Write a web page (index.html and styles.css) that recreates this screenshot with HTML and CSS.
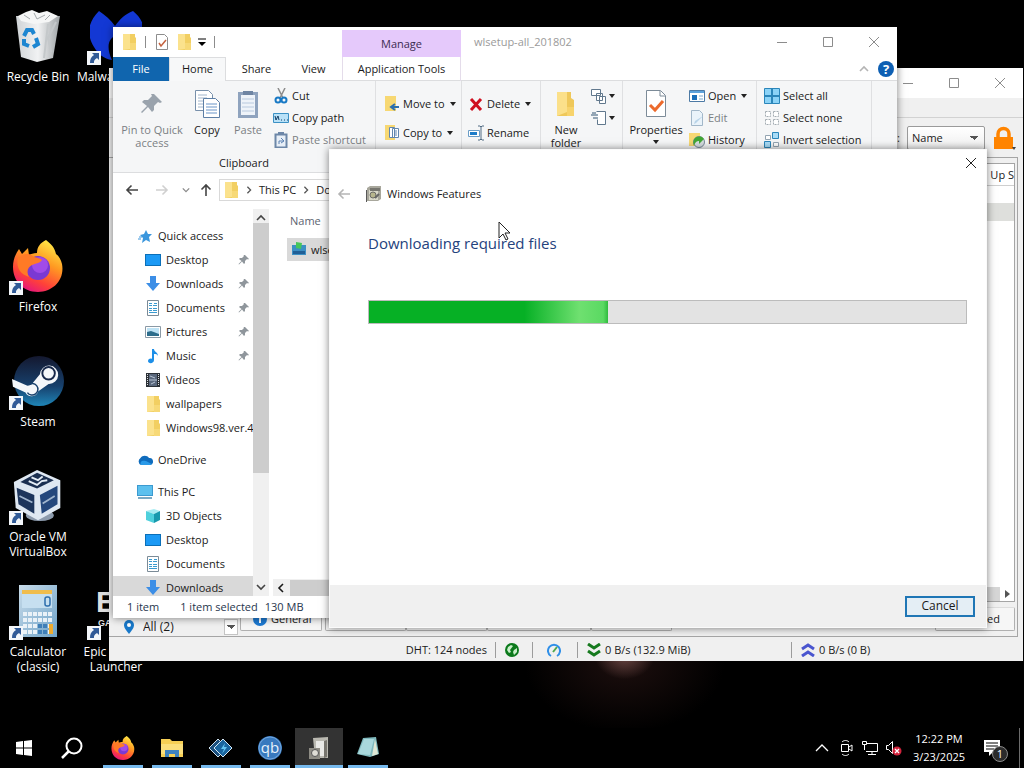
FILE: index.html
```
<!DOCTYPE html>
<html lang="en">
<head>
  <meta charset="UTF-8">
  <title>Desktop</title>
  <link rel="stylesheet" href="styles.css">
</head>
<body>
  <svg class="sprite" aria-hidden="true">
    <defs>
      <linearGradient id="gFox" x1="0.8" y1="0" x2="0.3" y2="1">
        <stop offset="0" stop-color="#fff04a"/><stop offset="0.4" stop-color="#ff9a22"/><stop offset="0.75" stop-color="#ff4139"/><stop offset="1" stop-color="#e4147f"/>
      </linearGradient>
      <linearGradient id="gSteam" x1="0" y1="0" x2="0" y2="1">
        <stop offset="0" stop-color="#14182f"/><stop offset="0.6" stop-color="#17406c"/><stop offset="1" stop-color="#1f86b8"/>
      </linearGradient>
      <linearGradient id="gBin" x1="0" y1="0" x2="1" y2="0">
        <stop offset="0" stop-color="#cfd3d6"/><stop offset="0.5" stop-color="#f1f2f3"/><stop offset="1" stop-color="#9fa4a7"/>
      </linearGradient>
      <linearGradient id="gCalc" x1="0" y1="0" x2="1" y2="1">
        <stop offset="0" stop-color="#c9dcea"/><stop offset="1" stop-color="#6fa3c8"/>
      </linearGradient>
    </defs>
    <symbol id="folder" viewBox="0 0 16 16"><path d="M2 0h12v3l1 1v12H2z" fill="#f2cf62"/><path d="M2 0h7v15l-7 1z" fill="#fbe28d"/><path d="M9 9h6v7H9z" fill="#f7d977"/></symbol>
    <symbol id="pin" viewBox="0 0 24 24"><path d="M14 2l8 8-2 1-2-1-4 4v4l-2 2-4-5-6 6-1-1 6-6-5-4 2-2h4l4-4-1-2z"/></symbol>
    <symbol id="screen" viewBox="0 0 16 16"><path d="M0 2h16v12H0z" fill="#0b6fb8"/><path d="M1 3h14v10H1z" fill="#1c9af5"/></symbol>
    <symbol id="down" viewBox="0 0 16 16"><path d="M5 0h6v7h4l-7 8-7-8h4z" fill="#3c8ee6"/></symbol>
    <symbol id="doc" viewBox="0 0 16 16"><path d="M2.500 .5h11v15h-11z" fill="#fff" stroke="#7b8b97"/><path d="M4 3.500h3M9 3.500h3M4 5.500h3M8 5.500h4M4 8.500h3M8 8.500h4M4 10.500h3M8 10.500h4M4 12.500h8" stroke="#3b9bd0"/></symbol>
    <symbol id="pic" viewBox="0 0 16 16"><path d="M.5 2.500h15v11H.5z" fill="#fff" stroke="#8a99a5"/><path d="M2 4h12v8H2z" fill="#bfe3f5"/><path d="M2 8l4-1 8 3v2H2z" fill="#2d6d8c"/></symbol>
    <symbol id="music" viewBox="0 0 16 16"><path d="M7 1h2c0 3 4 3 4 7-1-2-2-2-4-2v6c0 4-6 4-6 1s4-3 4-2z" fill="#1d8fe8"/></symbol>
    <symbol id="video" viewBox="0 0 16 16"><path d="M1 1h14v14H1z" fill="#2b3036"/><path d="M4 2h8v12H4z" fill="#59677c"/><path d="M4 8h8M5 4l5 2M6 12l4-2" stroke="#b8c4d4"/><path d="M2.500 2v12M13.500 2v12" stroke="#dce0e4" stroke-dasharray="1 1"/></symbol>
    <symbol id="star" viewBox="0 0 16 16"><path d="M9 2l2 4 4 0-3 3 1 5-4-2-4 3 1-5-3-3 4-1z" fill="#3a96dd"/><path d="M2 9h3M1 11h3" stroke="#3a96dd"/></symbol>
    <symbol id="cloud" viewBox="0 0 16 16"><path d="M4 13a4 4 0 0 1-.5-7A5 5 0 0 1 12 6a3.500 3.500 0 0 1 1 7z" fill="#0f6cbd"/><path d="M4 13a3 3 0 0 1 1-4c4-1 5 1 10 3l-2 1z" fill="#2a9ae8"/></symbol>
    <symbol id="pc" viewBox="0 0 16 16"><path d="M0 1h16v11H0z" fill="#3c9ad0"/><path d="M1 2h14v9H1z" fill="#5cc0ee"/><path d="M1 14h14" stroke="#7aa9c4" stroke-width="2"/></symbol>
    <symbol id="cube" viewBox="0 0 16 16"><path d="M1 3l8-2 6 2-6 3z" fill="#a8ecf2"/><path d="M1 3l8 3v9l-8-3z" fill="#4fd0dc"/><path d="M9 6l6-3v9l-6 3z" fill="#1899ad"/></symbol>
    <symbol id="min" viewBox="0 0 12 12"><path d="M1 6.500h10" stroke="currentColor"/></symbol>
    <symbol id="max" viewBox="0 0 12 12"><path d="M1.500 1.500h9v9h-9z" fill="none" stroke="currentColor"/></symbol>
    <symbol id="close" viewBox="0 0 12 12"><path d="M1 1l10 10M11 1L1 11" stroke="currentColor"/></symbol>
    <symbol id="left" viewBox="0 0 14 14"><path d="M13 7H2M6.500 2.500L2 7l4.500 4.500" fill="none" stroke="currentColor" stroke-width="1.600"/></symbol>
    <symbol id="chev" viewBox="0 0 10 10"><path d="M1 7l4-4 4 4" fill="none" stroke="currentColor" stroke-width="1.600"/></symbol>
    <symbol id="shortcut" viewBox="0 0 14 14"><path d="M0 0h14v14H0z" fill="#f3f6fa"/><path d="M5 2h7v7l-2-2c-3 2-3 3-3 5H3c0-4 1-6 4-8z" fill="#305a97"/></symbol>
    <symbol id="firefox" viewBox="0 0 52 52">
      <path d="M34 0c8 6 9 10 10 14 3 2 5 6 6 10 3 16-9 28-24 28S1 41 1 27c0-7 2-12 6-18l3 5 6-6 1 7c2-1 4-2 8-2 0-6 3-10 9-13z" fill="url(#gFox)"/>
      <circle cx="26" cy="28" r="12" fill="#7a39d3"/><circle cx="28" cy="25" r="8" fill="#a14be8"/>
      <path d="M6 18c6-5 12-5 16-1 3 1 6 1 8 3-3 4-6 3-10 5-4 2-6 6-3 12C7 34 4 26 6 18z" fill="#ff7a26"/>
    </symbol>
  </svg>

  <main class="desktop">
    <div class="icons">
      <a class="icon" href="#">
        <svg viewBox="0 0 52 52"><path d="M4 6h44l-7 42-16 4-16-5z" fill="url(#gBin)"/><path d="M6 6l8-4 6-2 7 3 8-2 11 5-9 6-15 2-13-3z" fill="#f5f6f6"/><path d="M12 5l6 4M22 3l3 6 8-4M38 5l-5 5" stroke="#a3a8ab" fill="none"/><path d="M36 14l-4 34M44 12l-8 16 3 14" stroke="#c4c8ca" stroke-width="2" fill="none"/><path d="M12 26l3-6h5l2 4M24 28l2 6-5 3M17 36l-5-2 0-5" fill="none" stroke="#1d86d1" stroke-width="4"/></svg>
        <span>Recycle Bin</span>
      </a>
      <a class="icon" href="#">
        <svg viewBox="0 0 52 52"><path d="M9 1c6 4 12 9 16 15C30 9 35 4 43 1c10 8 16 22 7 36-5 9-12 14-20 16 6-8 5-20-3-28-9 3-11 12-5 25-8-1-14-6-18-13C-4 24-2 12 9 1z" fill="#1338d4"/></svg>
        <svg class="link-mark"><use href="#shortcut"/></svg>
        <span>Malwarebytes</span>
      </a>
      <a class="icon row3" href="#">
        <svg><use href="#firefox"/></svg>
        <svg class="link-mark"><use href="#shortcut"/></svg>
        <span>Firefox</span>
      </a>
      <a class="icon row4" href="#">
        <svg viewBox="0 0 54 54"><circle cx="28" cy="27" r="26" fill="url(#gSteam)"/><path d="M0 25l16 7 4-1 9-11a9.500 9.500 0 1 1 9 10l-11 8a7 7 0 0 1-13 1L1 33z" fill="#f4f7fa"/><circle cx="38" cy="19" r="6.500" fill="#f4f7fa" stroke="#17284a" stroke-width="2"/><path d="M17 31a6 6 0 1 1-1 8" fill="none" stroke="#17406c" stroke-width="1.500"/></svg>
        <svg class="link-mark"><use href="#shortcut"/></svg>
        <span>Steam</span>
      </a>
      <a class="icon row5" href="#">
        <svg viewBox="0 0 52 56"><ellipse cx="28" cy="49" rx="15" ry="6" fill="#8d9bad"/><path d="M0 13L25 0l25 11v30L26 54 2 41z" fill="#dfe8f2"/><path d="M7 13l18-10 18 8-18 9z" fill="#1b2f50"/><path d="M16 12l9 4 5-4 6-1M19 8l7 3 5-4" stroke="#e6eef6" stroke-width="2" fill="none"/><path d="M3 19l19 8v20L5 37z" fill="#1d355c"/><path d="M28 27l19-10v20L30 47z" fill="#24477c"/><path d="M6 28l14 7M31 36l13-8" stroke="#9fb4cd" stroke-width="2"/></svg>
        <svg class="link-mark"><use href="#shortcut"/></svg>
        <span>Oracle VM VirtualBox</span>
      </a>
      <a class="icon row6" href="#">
        <svg viewBox="0 0 52 52"><path d="M7 0h38v52H7z" fill="url(#gCalc)"/><path d="M10 5h30v4H10z" fill="#f0bd4d"/><path d="M10 9h30v14H10z" fill="#c6dff0"/><rect x="33" y="12" width="5" height="9" rx="2" fill="none" stroke="#2d6eac" stroke-width="1.500"/><path d="M11 29h30M11 35h30M11 41h30M11 47h30" stroke="#eaf2f8" stroke-width="4" stroke-dasharray="4 1"/><path d="M26 41h9M26 47h9" stroke="#3f7fb8" stroke-width="4" stroke-dasharray="4 1"/><path d="M37 39h4v10h-4z" fill="#efab2e"/></svg>
        <svg class="link-mark"><use href="#shortcut"/></svg>
        <span>Calculator (classic)</span>
      </a>
      <a class="icon row6 col2" href="#">
        <svg class="epic" viewBox="0 0 52 52"><text x="6" y="27" class="epic-big">EPIC</text><text x="8" y="41" class="epic-small">GAMES</text></svg>
        <svg class="link-mark"><use href="#shortcut"/></svg>
        <span>Epic Games Launcher</span>
      </a>
    </div>

    <section class="window torrent">
      <header class="title-row">
        <div class="caption">
          <button aria-label="Minimize"><svg><use href="#min"/></svg></button>
          <button aria-label="Maximize"><svg><use href="#max"/></svg></button>
          <button aria-label="Close"><svg><use href="#close"/></svg></button>
        </div>
      </header>
      <div class="menubar"></div>
      <div class="torrent-tools">
        <label for="filterBy">:</label>
        <select id="filterBy"><option>Name</option></select>
        <svg viewBox="0 0 24 26"><path d="M6 12V9a5.500 5.500 0 0 1 11 0v3" fill="none" stroke="#ff8400" stroke-width="3.500"/><path d="M2 12h19v12H2z" fill="#ff8400"/><path d="M20 22h4l-2 3z" fill="#444"/></svg>
      </div>
      <div class="torrent-main">
        <div class="trackers">
          <svg viewBox="0 0 12 16"><path d="M6 15C2 10 1 8 1 6a5 5 0 0 1 10 0c0 2-1 4-5 9z" fill="#1878c9"/><circle cx="6" cy="6" r="2" fill="#fff"/></svg>
          <select aria-label="Tracker filter"><option>All (2)</option></select>
        </div>
        <div class="transfers">
          <div class="transfer-list">
            <div class="col-head">Up S</div>
            <div class="selected"></div>
            <div class="hbar"><button aria-label="Scroll right"><svg viewBox="0 0 8 8"><path d="M2 0l5 4-5 4z" fill="#555"/></svg></button></div>
          </div>
          <nav class="tabs">
            <button class="tab-general"><svg viewBox="0 0 14 14"><circle cx="7" cy="7" r="7" fill="#1d7ad2"/><path d="M7 6v5M7 3v2" stroke="#fff" stroke-width="2"/></svg>General</button>
            <button class="tab-short">Trackers</button>
            <button class="tab-short">Peers</button>
            <button class="tab-long">HTTP Sources</button>
            <button class="tab-short">Content</button>
            <button class="tab-speed">Speed</button>
          </nav>
        </div>
      </div>
      <footer class="torrent-status">
        <span class="dht">DHT: 124 nodes</span>
        <span class="cell net"><svg viewBox="0 0 14 14"><circle cx="7" cy="7" r="7" fill="#0c7a1c"/><path d="M3 4l3-2 2 1-3 4 1 2-2 1-2-3zM9 7l3-2v4l-3 3-1-3z" fill="#c9efc9"/></svg></span>
        <span class="cell gauge"><svg viewBox="0 0 14 14"><path d="M4 13a6 6 0 1 1 6 0" fill="none" stroke="#2f8fe8" stroke-width="2"/><path d="M6 9l4-5" stroke="#4ea84e" stroke-width="2"/></svg></span>
        <span class="cell down"><svg viewBox="0 0 14 14"><path d="M1 1l6 4 6-4M1 8l6 4 6-4" fill="none" stroke="#167a1e" stroke-width="3"/></svg>0 B/s (132.9 MiB)</span>
        <span class="cell up"><svg viewBox="0 0 14 14"><path d="M1 6l6-4 6 4M1 13l6-4 6 4" fill="none" stroke="#4a55cf" stroke-width="3"/></svg>0 B/s (0 B)</span>
      </footer>
    </section>

    <section class="window explorer">
      <header class="title-row">
        <div class="quick-bar">
          <svg><use href="#folder"/></svg>
          <i></i>
          <svg viewBox="0 0 16 16"><path d="M2.500 .5h8l3 3v12h-11z" fill="#fff" stroke="#8d8d8d"/><path d="M5 9l2 3 5-6" fill="none" stroke="#c4623f" stroke-width="1.500"/></svg>
          <svg><use href="#folder"/></svg>
          <svg class="more" viewBox="0 0 8 8"><path d="M0 1h8" stroke="#000"/><path d="M0 4h8L4 8z"/></svg>
          <i></i>
        </div>
        <div class="manage">Manage</div>
        <h1>wlsetup-all_201802</h1>
        <div class="caption">
          <button aria-label="Minimize"><svg><use href="#min"/></svg></button>
          <button aria-label="Maximize"><svg><use href="#max"/></svg></button>
          <button aria-label="Close"><svg><use href="#close"/></svg></button>
        </div>
      </header>
      <nav class="ribbon-tabs">
        <button class="file">File</button>
        <button class="home">Home</button>
        <button>Share</button>
        <button>View</button>
        <button class="app-tools">Application Tools</button>
        <svg class="fold"><use href="#chev"/></svg>
        <svg class="help" viewBox="0 0 16 16"><circle cx="8" cy="8" r="8" fill="#0d5fb3"/><text x="8" y="13" class="help-mark">?</text></svg>
      </nav>
      <div class="ribbon">
        <div class="group clipboard">
          <div class="group-row">
            <button class="big pin-btn off"><svg><use href="#pin"/></svg>Pin to Quick access</button>
            <button class="big copy-btn"><svg viewBox="0 0 28 30"><path d="M2.500 1.500h13l4 4v16h-17z" fill="#fff" stroke="#7890ab"/><path d="M5 6h9M5 9h9M5 12h6M5 15h6M5 18h6" stroke="#a2b6cc"/><path d="M10.500 9.500h12l4 4v15h-16z" fill="#fff" stroke="#5d7fa6"/><path d="M13 15h11M13 18h11M13 21h11M13 24h11" stroke="#6b95c8"/></svg>Copy</button>
            <button class="big paste-btn off"><svg viewBox="0 0 28 30"><path d="M4 3h20v26H4z" fill="#8fa3be"/><path d="M7 6h14v20H7z" fill="#eef3f9"/><path d="M9 2h10v4H9z" fill="#6f85a3"/><path d="M8 10h12M8 14h12M8 18h12M8 22h12" stroke="#b8c9de"/></svg>Paste</button>
            <div class="stack">
              <button><svg viewBox="0 0 16 16"><path d="M5 0l5 10M12 0L7 10" stroke="#8c8c8c" stroke-width="1.500"/><circle cx="5" cy="12" r="2.500" fill="none" stroke="#1879c5" stroke-width="2"/><circle cx="11" cy="12" r="2.500" fill="none" stroke="#1879c5" stroke-width="2"/></svg>Cut</button>
              <button><svg viewBox="0 0 16 16"><path d="M.5 3.500h15v9H.5z" fill="#b9e1f7" stroke="#3c91c4"/><path d="M2 6l1 4 2-4 1 4M8 10h1M11 10h1M14 10h1" fill="none" stroke="#123e66"/></svg>Copy path</button>
              <button class="off"><svg viewBox="0 0 16 16"><path d="M2.500 2.500h11v13h-11z" fill="#e8eff7" stroke="#6d87a8" stroke-width="2"/><path d="M5 0h6v3H5z" fill="#6d87a8"/><path d="M6 12V9h4M8 6l3 3-3 2" fill="none" stroke="#5c82b3"/></svg>Paste shortcut</button>
            </div>
          </div>
          <h2>Clipboard</h2>
        </div>
        <div class="group move">
          <button><svg viewBox="0 0 16 16"><path d="M1 0h11v15H1z" fill="#f7d873"/><path d="M15 11H8M11 8l-4 3 4 3" fill="none" stroke="#2c6fae" stroke-width="2"/></svg>Move to<b></b></button>
          <button><svg viewBox="0 0 16 16"><path d="M1 0h10v15H1z" fill="#f7d873"/><path d="M5.500 2.500h5v10h-5zM8.500 3.500h6v9h-6z" fill="#fff" stroke="#6287b0"/><path d="M10 6h3M10 8h3M10 10h3" stroke="#6287b0"/></svg>Copy to<b></b></button>
        </div>
        <div class="group delete">
          <button><svg viewBox="0 0 16 16"><path d="M3 3l10 11M13 3L3 14" stroke="#cf1020" stroke-width="3"/></svg>Delete<b></b></button>
          <button><svg viewBox="0 0 16 16"><path d="M.5 5.500h11v6H.5z" fill="#fff" stroke="#6a9dc7"/><path d="M2 7h7v3H2z" fill="#1d7cc9"/><path d="M10 1h2l1 1 1-1h2M13 2v12M10 15h2l1-1 1 1h2" fill="none" stroke="#526c84"/></svg>Rename</button>
        </div>
        <div class="group new">
          <button class="big"><svg viewBox="0 0 28 30"><path d="M5 3h14v6l3 2v16H5z" fill="#efc85a"/><path d="M5 3h10v20L5 27z" fill="#fbe08a"/><path d="M15 18h7v9h-7z" fill="#f7d36c"/></svg>New folder</button>
          <div class="mini">
            <button aria-label="New item"><svg viewBox="0 0 16 16"><path d="M.5 1.500h9v6h-9zM5.500 5.500h6v7h-6zM8.500 8.500h6v7h-6z" fill="#fff" stroke="#61788d"/></svg><b></b></button>
            <button aria-label="Easy access"><svg viewBox="0 0 16 16"><path d="M5.500 1.500h9v13h-8v-5" fill="#fff" stroke="#61788d"/><path d="M0 5h7M2 8h5M1 3h4" stroke="#345675"/></svg><b></b></button>
          </div>
        </div>
        <div class="group open">
          <button class="big"><svg viewBox="0 0 28 30"><path d="M4.500 1.500h14l5 5v21h-19z" fill="#fff" stroke="#7c8b98"/><path d="M18 2v5h5" fill="none" stroke="#7c8b98"/><path d="M8 16l5 5 8-9" fill="none" stroke="#ec6a2c" stroke-width="3"/></svg>Properties<b></b></button>
          <div class="stack">
            <button><svg viewBox="0 0 16 16"><path d="M.5 2.500h15v11H.5z" fill="#fff" stroke="#4d7aa5"/><path d="M1 3h14v2H1z" fill="#5ea3dc"/><path d="M3 7h5v5H3z" fill="#1c6fb9"/><path d="M10 8h4M10 11h4" stroke="#7ba9cf"/></svg>Open<b></b></button>
            <button class="off"><svg viewBox="0 0 16 16"><path d="M2.500 .5h8l3 3v12h-11z" fill="#eaf3fa" stroke="#a2b7c9"/><path d="M14 6l-7 7-2 1 1-3z" fill="#b8d3e8"/></svg>Edit</button>
            <button><svg viewBox="0 0 16 16"><path d="M0 1h11v13H0z" fill="#f7d873"/><circle cx="10" cy="10" r="5.500" fill="#d7dde0" stroke="#789"/><path d="M13 5C6 3 3 8 5 14c1-4 3-5 5-5v3l5-5z" fill="#42a734"/></svg>History</button>
          </div>
        </div>
        <div class="group select">
          <div class="stack">
            <button><svg viewBox="0 0 16 16"><path d="M.5 .5h15v15H.5z" fill="#8bd3f7" stroke="#2b86ba"/><path d="M8 0v16M0 8h16" stroke="#2b86ba" stroke-width="2"/></svg>Select all</button>
            <button><svg viewBox="0 0 16 16"><path d="M1.500 1.500h5v5h-5zM9.500 1.500h5v5h-5zM1.500 9.500h5v5h-5zM9.500 9.500h5v5h-5z" fill="#fff" stroke="#a5adb3" stroke-dasharray="2 1"/></svg>Select none</button>
            <button><svg viewBox="0 0 16 16"><path d="M1.500 3.500h5v4h-5zM9.500 10.500h5v4h-5z" fill="#fff" stroke="#94a5b2"/><path d="M8.500 .5h6v6h-6zM.5 9.500h6v6h-6z" fill="#a9dcf7" stroke="#2b86ba"/></svg>Invert selection</button>
          </div>
        </div>
      </div>
      <div class="address">
        <button class="nav-btn" aria-label="Back"><svg><use href="#left"/></svg></button>
        <button class="nav-btn dim" aria-label="Forward"><svg class="flip"><use href="#left"/></svg></button>
        <button class="nav-btn recent" aria-label="Recent"><svg class="turn small"><use href="#chev"/></svg></button>
        <button class="nav-btn upward" aria-label="Up"><svg class="quarter"><use href="#left"/></svg></button>
        <div class="path"><svg><use href="#folder"/></svg><svg class="sep"><use href="#chev"/></svg><a href="#">This PC</a><svg class="sep"><use href="#chev"/></svg><a href="#">Downloads</a></div>
      </div>
      <div class="explorer-body">
        <nav class="tree">
          <a href="#"><svg><use href="#star"/></svg>Quick access</a>
          <a class="sub" href="#"><svg><use href="#screen"/></svg>Desktop<svg class="tack"><use href="#pin"/></svg></a>
          <a class="sub" href="#"><svg><use href="#down"/></svg>Downloads<svg class="tack"><use href="#pin"/></svg></a>
          <a class="sub" href="#"><svg><use href="#doc"/></svg>Documents<svg class="tack"><use href="#pin"/></svg></a>
          <a class="sub" href="#"><svg><use href="#pic"/></svg>Pictures<svg class="tack"><use href="#pin"/></svg></a>
          <a class="sub" href="#"><svg><use href="#music"/></svg>Music<svg class="tack"><use href="#pin"/></svg></a>
          <a class="sub" href="#"><svg><use href="#video"/></svg>Videos</a>
          <a class="sub" href="#"><svg><use href="#folder"/></svg>wallpapers</a>
          <a class="sub" href="#"><svg><use href="#folder"/></svg>Windows98.ver.4</a>
          <a class="root" href="#"><svg><use href="#cloud"/></svg>OneDrive</a>
          <a class="root" href="#"><svg><use href="#pc"/></svg>This PC</a>
          <a class="sub" href="#"><svg><use href="#cube"/></svg>3D Objects</a>
          <a class="sub" href="#"><svg><use href="#screen"/></svg>Desktop</a>
          <a class="sub" href="#"><svg><use href="#doc"/></svg>Documents</a>
          <a class="sub current" href="#"><svg><use href="#down"/></svg>Downloads</a>
        </nav>
        <div class="vbar">
          <svg><use href="#chev"/></svg>
          <div class="thumb"></div>
          <svg class="turn"><use href="#chev"/></svg>
        </div>
        <div class="files">
          <table>
            <thead><tr><th>Name</th></tr></thead>
            <tbody><tr><td><svg viewBox="0 0 16 16"><path d="M1 3h14v10H1z" fill="#3b8fc4"/><path d="M2 9h12v3H2z" fill="#205f96"/><path d="M5 0l6 1-1 6-5-1z" fill="#45c65a"/></svg>wlsetup-all</td></tr></tbody>
          </table>
          <div class="hscroll"><svg><use href="#chev"/></svg><div class="thumb"></div></div>
        </div>
      </div>
      <footer class="explorer-status"><span>1 item</span><span>1 item selected</span><span>130 MB</span></footer>
    </section>

    <section class="window dialog">
      <button class="dialog-close" aria-label="Close"><svg><use href="#close"/></svg></button>
      <header>
        <svg class="back"><use href="#left"/></svg>
        <svg viewBox="0 0 16 16"><path d="M1 2l3-2h11v13l-3 2H1z" fill="#a8a79c"/><path d="M3 4h9v10H3z" fill="#d9d8c9"/><path d="M0 4v12" stroke="#222" stroke-width="1.500"/><path d="M4 2h10v3H4z" fill="#77766f"/><circle cx="7" cy="9" r="3" fill="#b7b58d" stroke="#6b6b66"/><path d="M9 12l4-4" stroke="#666" stroke-width="2"/></svg>
        <h2>Windows Features</h2>
      </header>
      <div class="dialog-body">
        <h3>Downloading required files</h3>
        <div class="progress" role="progressbar" aria-label="Downloading required files" aria-valuenow="40" aria-valuemin="0" aria-valuemax="100"><div class="fill" style="width: 40%"></div></div>
      </div>
      <footer><button class="cancel">Cancel</button></footer>
    </section>

    <svg class="cursor" viewBox="0 0 13 20"><path d="M1 1v16l4-4 3 6 2-1-3-6h5z" fill="#fff" stroke="#222"/></svg>
  </main>

  <footer class="taskbar">
    <button aria-label="Start"><svg class="start" viewBox="0 0 16 16"><path d="M0 2l7-1v6.500H0zM8 1l8-1v7.500H8zM0 8.500h7V15l-7-1zM8 8.500h8V16l-8-1z" fill="#fff"/></svg></button>
    <button aria-label="Search"><svg viewBox="0 0 24 24"><circle cx="14" cy="10" r="7.500" fill="none" stroke="#fff" stroke-width="2"/><path d="M8.500 15.500L2 22" stroke="#fff" stroke-width="2.500"/></svg></button>
    <div class="apps">
      <button class="app" aria-label="Firefox"><svg><use href="#firefox"/></svg></button>
      <button class="app" aria-label="File Explorer"><svg viewBox="0 0 24 24"><path d="M1 3h9l2 2h11v16H1z" fill="#f6cf55"/><path d="M1 8h22v10H1z" fill="#fbdf7c"/><path d="M5 21v-7h14v7h-4v-3H9v3z" fill="#3f83bf"/></svg></button>
      <button class="app" aria-label="Disk tool"><svg viewBox="0 0 24 24"><path d="M0 12l9-9 9 9-9 9z" fill="#1b4f7d" stroke="#cfe2f0"/><path d="M5 12l9-9 9 9-9 9z" fill="#1a659f" stroke="#d5e8f5"/><path d="M16 7l-4 6h3l-2 5 5-7h-3z" fill="#63c6f3"/></svg></button>
      <button class="app" aria-label="qBittorrent"><svg viewBox="0 0 24 24"><circle cx="12" cy="12" r="12" fill="#3879be"/><circle cx="12" cy="12" r="11" fill="none" stroke="#72a6dc"/><text x="12" y="17" class="qb">qb</text></svg></button>
      <button class="app active" aria-label="Windows Features"><svg viewBox="0 0 24 24"><path d="M6 2l15-1v21H8z" fill="#b9b8b0"/><path d="M9 5h8v15H9z" fill="#e9e9e6"/><path d="M17 5l3-1v17l-3 1z" fill="#77756e"/><path d="M2 12h11v11H2z" fill="#8e8c84"/><circle cx="8" cy="17" r="3.500" fill="#dfddd5" stroke="#555"/></svg></button>
      <button class="app" aria-label="Notepad"><svg viewBox="0 0 24 24"><path d="M7 2l13-1 3 17-9 3-13-3z" fill="#7fb9bd"/><path d="M8 3h10l-4 16-12-1z" fill="#a9d8dc"/><path d="M19 3l3 15-6 2z" fill="#e0e8d5"/></svg></button>
    </div>
    <div class="tray">
      <svg viewBox="0 0 16 16"><path d="M2 11l6-6 6 6" fill="none" stroke="#fff" stroke-width="1.300"/></svg>
      <svg viewBox="0 0 16 16"><path d="M3.500 4.500h7v7h-7zM11 7l3-2v6l-3-2M4 2c2-2 5-2 7 0M4 14c2 2 5 2 7 0" fill="none" stroke="#fff"/></svg>
      <svg viewBox="0 0 16 16"><path d="M4 3.500h11.500v8H4M10 11v4M6 14.500h8M.5 1.500h4v3h-4zM2.500 5v5" fill="none" stroke="#fff"/></svg>
      <svg viewBox="0 0 16 16"><path d="M.5 5.500h2l4-4v12l-4-4h-2z" fill="none" stroke="#fff"/><circle cx="11" cy="11" r="4.500" fill="#d2233c"/><path d="M9 9l4 4M13 9l-4 4" stroke="#fff" stroke-width="1.300"/></svg>
      <time>12:22 PM<br>3/23/2025</time>
      <div class="notice">
        <svg viewBox="0 0 16 16"><path d="M0 0h16v12H9l-4 4v-4H0z" fill="#fff"/><path d="M2 3h12M2 6h12M2 9h8" stroke="#000"/></svg>
        <span class="count">1</span>
      </div>
      <i></i>
    </div>
  </footer>
</body>
</html>
```
FILE: styles.css
```
* {
  margin: 0;
  padding: 0;
  box-sizing: border-box;
}
body {
  height: 100vh;
  display: flex;
  flex-direction: column;
  overflow: hidden;
  background-color: #000000;
  color: #1a1a1a;
  font-family: "Open Sans", "Noto Sans", sans-serif;
  font-size: 11px;
  line-height: 16px;
}
button, select {
  font: inherit;
  color: inherit;
  background: none;
  border: none;
  border-radius: 0;
}
a {
  color: inherit;
  text-decoration: none;
}
h1, h2, h3 {
  font-size: 11px;
  font-weight: 400;
}
svg {
  display: block;
  flex: none;
  width: 16px;
  height: 16px;
}
.sprite {
  position: absolute;
  width: 0;
  height: 0;
}
.turn { transform: rotate(180deg); }
.flip { transform: scaleX(-1); }
.quarter { transform: rotate(90deg); }

/* desktop */
.desktop {
  flex: 1;
  position: relative;
  min-height: 0;
  background:
    radial-gradient(ellipse 30px 24px at 61% 90%, #6b4744, transparent),
    radial-gradient(ellipse 100px 70px at 61% 91%, #1d0f0e, transparent);
}
.icons {
  display: grid;
  grid-template-columns: 76px 76px;
  grid-template-rows: repeat(6, 115px);
  column-gap: 2px;
}
.icon {
  position: relative;
  display: flex;
  flex-direction: column;
  align-items: center;
  padding-top: 10px;
  color: #ffffff;
  font-size: 12px;
  line-height: 15px;
  text-align: center;
}
.icon > svg {
  width: 52px;
  height: 52px;
  margin-bottom: 7px;
}
.icon .link-mark {
  position: absolute;
  left: 9px;
  top: 51px;
  width: 14px;
  height: 14px;
}
.epic text {
  fill: #dedede;
  font-family: "Liberation Sans Narrow", "Liberation Sans", sans-serif;
  font-weight: 700;
}
.epic-big { font-size: 30px; }
.epic-small { font-size: 9px; }
.row3 { grid-row: 3; }
.row4 { grid-row: 4; }
.row5 { grid-row: 5; }
.row6 { grid-row: 6; }
.col2 { grid-column: 2; }

/* windows */
.window {
  position: absolute;
  display: flex;
  flex-direction: column;
  background-color: #ffffff;
}
.title-row {
  display: flex;
  height: 30px;
}
.caption {
  display: flex;
  margin-left: auto;
  color: #8c8c8c;
}
.caption button {
  width: 46px;
  display: flex;
  align-items: center;
  justify-content: center;
}
.caption svg {
  width: 12px;
  height: 12px;
}

/* torrent client */
.torrent {
  left: 109px;
  right: 1px;
  top: 68px;
  bottom: 67px;
  background-color: #f0f0f0;
}
.torrent .title-row {
  background-color: #ffffff;
}
.menubar {
  height: 20px;
  border-bottom: 1px solid #d2d2d2;
}
.torrent-tools {
  display: flex;
  align-items: center;
  justify-content: flex-end;
  gap: 7px;
  height: 39px;
  padding-right: 7px;
}
.torrent-tools select {
  width: 78px;
  height: 24px;
  padding-left: 4px;
  appearance: none;
  border: 1px solid #9a9a9a;
  border-radius: 2px;
  background-image: conic-gradient(from 315deg at 50% 100%, #555555 90deg, transparent 0), linear-gradient(#ffffff, #f0f0f0);
  background-size: 8px 4px, 100% 100%;
  background-position: right 6px center, 0 0;
  background-repeat: no-repeat;
}
.torrent-tools svg {
  width: 24px;
  height: 26px;
}
.torrent-main {
  flex: 1;
  display: flex;
  align-items: flex-end;
  min-height: 0;
  margin-right: 5px;
  border: 1px solid #a5a5a5;
  border-left: none;
}
.trackers {
  display: flex;
  align-items: center;
  width: 131px;
  height: 18px;
  padding: 0 2px 0 14px;
}
.trackers svg {
  width: 12px;
  height: 16px;
}
.trackers select {
  flex: 1;
  height: 18px;
  padding-left: 8px;
  appearance: none;
  font-size: 12px;
  background-image: conic-gradient(from 315deg at 50% 100%, #555555 90deg, transparent 0), linear-gradient(#ffffff, #ffffff), linear-gradient(#c4c4c4, #c4c4c4);
  background-size: 8px 4px, 12px 14px, 14px 16px;
  background-position: right 3px center, right 1px center, right center;
  background-repeat: no-repeat;
}
.transfers {
  flex: 1;
  align-self: stretch;
  display: flex;
  flex-direction: column;
  padding: 5px 2px 5px 0;
}
.transfer-list {
  flex: 1;
  display: flex;
  flex-direction: column;
  border: 1px solid #a5a5a5;
  background-color: #ffffff;
  text-align: right;
}
.col-head {
  height: 22px;
  line-height: 22px;
  border-bottom: 1px solid #cfcfcf;
}
.selected {
  height: 18px;
  margin-top: 17px;
  background-color: #dedfdc;
}
.hbar {
  display: flex;
  justify-content: flex-end;
  height: 14px;
  margin-top: auto;
  background-color: #d6d6d6;
}
.hbar button {
  width: 14px;
  padding: 3px;
  background-color: #ffffff;
}
.hbar svg {
  width: 8px;
  height: 8px;
}
.tabs {
  display: flex;
  height: 24px;
  margin-top: 5px;
}
.tabs button {
  border: 1px solid #b0b0b0;
  border-top-color: #dddddd;
  background-color: #f6f6f6;
  border-radius: 2px;
}
.tabs .tab-general {
  display: flex;
  align-items: center;
  gap: 4px;
  width: 82px;
  padding-left: 12px;
  margin-right: 3px;
}
.tab-general svg {
  width: 14px;
  height: 14px;
}
.tabs .tab-short { width: 81px; }
.tabs .tab-long { width: 104px; }
.tabs .tab-speed {
  width: 80px;
  margin-left: auto;
  padding-right: 14px;
  text-align: right;
}
.torrent-status {
  display: flex;
  align-items: center;
  justify-content: flex-end;
  height: 24px;
  padding-top: 2px;
}
.dht {
  padding-right: 8px;
}
.cell {
  display: flex;
  align-items: center;
  gap: 4px;
  height: 16px;
  padding-left: 9px;
  border-left: 1px solid #9c9c9c;
}
.cell svg {
  width: 14px;
  height: 14px;
}
.net { width: 37px; }
.gauge {
  width: 45px;
  padding-left: 14px;
}
.down { width: 214px; }
.up { width: 232px; }

/* file explorer */
.explorer {
  left: 113px;
  right: 127px;
  top: 27px;
  bottom: 110px;
  box-shadow: 0 0 8px rgba(0, 0, 0, 0.5);
}
.quick-bar {
  display: flex;
  align-items: center;
  gap: 6px;
  width: 229px;
  padding-left: 8px;
}
.quick-bar i {
  width: 1px;
  height: 12px;
  margin: 0 2px;
  background-color: #8c8c8c;
}
.quick-bar .more {
  width: 8px;
  height: 8px;
}
.manage {
  width: 119px;
  margin-top: 3px;
  background-color: #e5c9fb;
  color: #3c2b52;
  line-height: 28px;
  text-align: center;
}
.explorer h1 {
  padding-left: 13px;
  color: #9a9a9a;
  line-height: 30px;
}
.ribbon-tabs {
  display: flex;
  align-items: center;
  height: 24px;
  border-bottom: 1px solid #dcdddf;
}
.ribbon-tabs button {
  width: 57px;
  height: 24px;
}
.ribbon-tabs .file {
  width: 56px;
  background-color: #1065ae;
  color: #ffffff;
}
.ribbon-tabs .home {
  margin-right: 2px;
  border: 1px solid #dcdddf;
  border-bottom: none;
  background-color: #f7f8f9;
}
.ribbon-tabs .app-tools {
  width: 119px;
  border: 1px solid #e4dcea;
  border-width: 0 1px;
}
.fold {
  width: 10px;
  height: 10px;
  margin-left: auto;
  color: #b4b4b4;
}
.help {
  margin: 0 3px 0 9px;
}
.help-mark {
  fill: #ffffff;
  font-size: 13px;
  font-weight: 700;
  text-anchor: middle;
}
.ribbon {
  display: flex;
  height: 92px;
  background-color: #f5f6f7;
  border-bottom: 1px solid #dcdddf;
}
.group {
  border-right: 1px solid #dfe0e2;
}
.ribbon button {
  display: flex;
  align-items: center;
  gap: 3px;
  white-space: nowrap;
}
.ribbon .off {
  color: #7b7f84;
  fill: #9aa3ad;
}
.ribbon b {
  border: 3px solid transparent;
  border-top: 4px solid #222222;
  border-bottom: none;
  margin-left: 2px;
}
.ribbon .big {
  flex-direction: column;
  gap: 4px;
  line-height: 13px;
  white-space: normal;
}
.ribbon .big svg {
  width: 28px;
  height: 30px;
}
.ribbon .big b {
  margin: 0;
}
.group-row, .new, .open {
  display: flex;
  align-items: flex-start;
}
.group-row {
  height: 74px;
  padding-top: 8px;
}
.clipboard {
  width: 263px;
}
.clipboard h2 {
  line-height: 16px;
  text-align: center;
}
.ribbon .pin-btn {
  width: 78px;
}
.ribbon .pin-btn svg {
  width: 24px;
  height: 24px;
  margin: 3px;
}
.ribbon .copy-btn { width: 32px; }
.ribbon .paste-btn { width: 50px; }
.stack button {
  height: 22px;
}
.group-row .stack {
  margin-top: -4px;
}
.move, .delete {
  padding-top: 8px;
}
.move {
  width: 86px;
  padding-left: 8px;
}
.delete {
  width: 79px;
  padding-left: 6px;
}
.move button, .delete button {
  height: 29px;
}
.new {
  width: 82px;
  padding: 8px 0 0 4px;
}
.new .big {
  width: 42px;
}
.mini {
  margin-top: -4px;
}
.mini button {
  height: 22px;
  padding-left: 4px;
  gap: 0;
}
.open {
  width: 134px;
  padding-top: 4px;
}
.open .big {
  width: 66px;
  padding-top: 4px;
}
.select {
  width: 115px;
  padding: 4px 0 0 7px;
}
.address {
  display: flex;
  align-items: center;
  height: 33px;
  padding-left: 4px;
}
.nav-btn {
  display: flex;
  justify-content: center;
  width: 30px;
  color: #444444;
}
.nav-btn svg {
  width: 14px;
  height: 14px;
}
.nav-btn .small {
  width: 8px;
  height: 8px;
}
.dim { color: #d0d0d0; }
.recent {
  width: 17px;
  color: #8a8a8a;
}
.upward {
  width: 24px;
}
.path {
  flex: 1;
  display: flex;
  align-items: center;
  gap: 6px;
  height: 22px;
  margin: 0 8px 0 1px;
  padding-left: 3px;
  border: 1px solid #d9d9d9;
}
.path .sep {
  width: 8px;
  height: 8px;
  color: #555555;
  transform: rotate(90deg);
}
.explorer-body {
  flex: 1;
  display: flex;
  min-height: 0;
  overflow: hidden;
}
.tree {
  width: 140px;
  padding-top: 18px;
  overflow: hidden;
}
.tree a {
  display: flex;
  align-items: center;
  gap: 5px;
  height: 24px;
  padding-left: 24px;
  white-space: nowrap;
}
.tree .sub {
  padding-left: 32px;
}
.tree .root {
  margin-top: 8px;
}
.tree .current {
  background-color: #d9d9d9;
}
.tree .tack {
  width: 12px;
  height: 12px;
  margin: 0 3px 0 auto;
  fill: #8f969c;
}
.vbar {
  display: flex;
  flex-direction: column;
  align-items: center;
  justify-content: space-between;
  width: 16px;
  margin-top: 3px;
  padding: 4px 0;
  background-color: #f0f0f0;
  color: #444444;
}
.vbar svg, .hscroll svg {
  width: 10px;
  height: 10px;
}
.vbar .thumb {
  width: 16px;
  height: 66%;
  margin: 0 0 auto;
  background-color: #cdcdcd;
}
.files {
  flex: 1;
  display: flex;
  flex-direction: column;
  justify-content: space-between;
  padding-left: 4px;
}
.files table {
  margin-left: 14px;
  border-spacing: 0;
}
.files th {
  height: 32px;
  padding: 0 0 2px 3px;
  color: #5c6470;
  font-weight: 400;
  text-align: left;
}
.files td {
  display: flex;
  align-items: center;
  gap: 4px;
  height: 23px;
  padding-left: 4px;
  background-color: #d9d9d9;
}
.hscroll {
  display: flex;
  align-items: center;
  height: 17px;
  background-color: #f0f0f0;
}
.hscroll svg {
  margin: 0 4px 0 3px;
  transform: rotate(-90deg);
}
.hscroll .thumb {
  width: 70%;
  height: 16px;
  background-color: #cdcdcd;
}
.explorer-status {
  display: flex;
  align-items: center;
  gap: 7px;
  height: 22px;
  padding-left: 14px;
  color: #27364d;
}
.explorer-status span:first-child {
  margin-right: 14px;
}

/* progress dialog */
.dialog {
  left: 329px;
  right: 37px;
  top: 149px;
  bottom: 100px;
  border: 1px solid #fafafa;
  box-shadow: 0 0 8px rgba(0, 0, 0, 0.5);
}
.dialog-close {
  position: absolute;
  right: 9px;
  top: 7px;
  color: #222222;
}
.dialog-close svg {
  width: 12px;
  height: 12px;
}
.dialog header {
  display: flex;
  align-items: center;
  gap: 5px;
  padding: 36px 0 0 7px;
}
.dialog .back {
  width: 14px;
  height: 14px;
  margin-right: 10px;
  color: #b5b5b5;
}
.dialog-body {
  flex: 1;
  padding: 29px 19px 0 38px;
}
.dialog h3 {
  color: #24427d;
  font-size: 15px;
  line-height: 24px;
}
.progress {
  height: 24px;
  margin-top: 45px;
  border: 1px solid #bcbcbc;
  background-color: #e3e3e3;
}
.fill {
  height: 100%;
  background: linear-gradient(to right, #06b025 65%, #6fe070 88%, #5ad962 98%, #2fbb3d);
}
.dialog footer {
  display: flex;
  align-items: center;
  justify-content: flex-end;
  height: 42px;
  padding-right: 11px;
  background-color: #f0f0f0;
}
.cancel {
  width: 70px;
  height: 21px;
  border: 2px solid #1f76b5;
  background-color: #e4eef5;
  font-size: 12px;
  line-height: 16px;
}
.cursor {
  position: absolute;
  left: 498px;
  top: 221px;
  width: 13px;
  height: 20px;
}

/* taskbar */
.taskbar {
  display: flex;
  height: 40px;
  background-color: #000000;
  color: #ffffff;
}
.taskbar button {
  display: flex;
  align-items: center;
  justify-content: center;
  width: 48px;
}
.taskbar button svg {
  width: 24px;
  height: 24px;
}
.taskbar .start {
  width: 16px;
  height: 16px;
}
.apps {
  display: flex;
  gap: 1px;
  margin-left: 3px;
}
.apps .app {
  background: linear-gradient(#76b9ed, #76b9ed) center bottom / 40px 3px no-repeat;
}
.apps .active {
  background-color: #333333;
  background-size: 48px 3px;
}
.qb {
  fill: #e8f2fb;
  font-size: 15px;
  text-anchor: middle;
}
.tray {
  display: flex;
  align-items: center;
  margin-left: auto;
  gap: 8px;
}
time {
  width: 58px;
  line-height: 18px;
  text-align: center;
}
.notice {
  position: relative;
  margin: 0 11px 0 8px;
}
.count {
  position: absolute;
  left: 8px;
  top: 6px;
  width: 16px;
  height: 16px;
  border: 1px solid #8a8a8a;
  border-radius: 50%;
  background-color: #2b2b2b;
  line-height: 14px;
  text-align: center;
}
.tray i {
  width: 1px;
  height: 40px;
  margin-right: 4px;
  background-color: #6b6b6b;
}
```
